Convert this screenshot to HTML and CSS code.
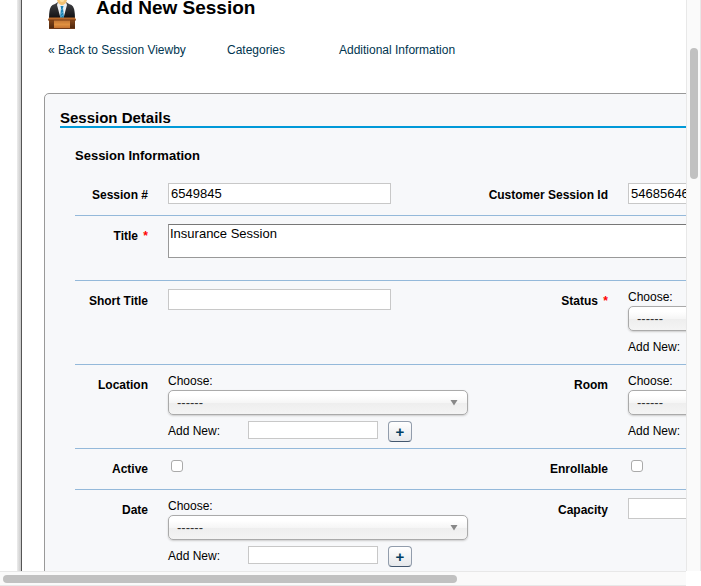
FILE: index.html
```html
<!DOCTYPE html>
<html lang="en">
<head>
<meta charset="utf-8">
<title>Add New Session</title>
<link rel="stylesheet" href="styles.css">
</head>
<body>
<main class="viewport">
  <div class="page">
    <header class="page-header">
      <svg class="speaker" viewBox="0 0 28 29" aria-hidden="true">
        <defs>
          <linearGradient id="suit" x1="0" y1="0" x2="0" y2="1"><stop offset="0" stop-color="#454548"/><stop offset="1" stop-color="#111114"/></linearGradient>
          <linearGradient id="wood" x1="0" y1="0" x2="0" y2="1"><stop offset="0" stop-color="#c07434"/><stop offset="0.5" stop-color="#e09040"/><stop offset="1" stop-color="#bd6b2c"/></linearGradient>
          <linearGradient id="side" x1="0" y1="0" x2="0" y2="1"><stop offset="0" stop-color="#8a4a1c"/><stop offset="1" stop-color="#4a240c"/></linearGradient>
        </defs>
        <path d="M1 18 Q1 10 3 6.500 Q4 4.500 7 4 L10 2 H18 L21 4 Q24 4.500 25 6.500 Q27 10 27 18Z" fill="url(#suit)"/>
        <path d="M10 2 L9 5 L12.500 18 H15.500 L19 5 L18 2Z" fill="#eef0f2"/>
        <path d="M9 0 H19 Q18.500 3 16 4.500 Q14 6 12 4.500 Q9.500 3 9 0Z" fill="#f3c273"/>
        <path d="M11.500 0 H16.500 Q16 2 14 2 Q12 2 11.500 0Z" fill="#ffdf9f"/>
        <path d="M12.500 6 H15.500 L15 8 L16 18 H12 L13 8Z" fill="#1c83b5"/>
        <path d="M13 10 L15 8.500 M12.500 14 L15.500 11.500 M12.500 17 L15.500 14.500" stroke="#69bde0" stroke-width="0.800"/>
        <path d="M1 19 H27 V29 H1Z" fill="url(#side)"/>
        <path d="M6 20 H22 V29 H6Z" fill="url(#wood)"/>
        <path d="M1 17.500 H27 L28 20 H0Z" fill="#b96a2c"/>
        <path d="M0 20 H28" stroke="#743b14"/>
        <path d="M1 28.500 H27" stroke="#6e3919"/>
      </svg>
      <h1>Add New Session</h1>
    </header>
    <nav class="links">
      <a href="#viewby">« Back to Session Viewby</a>
      <a href="#categories">Categories</a>
      <a href="#additional">Additional Information</a>
    </nav>
    <form class="panel">
      <h2>Session Details</h2>
      <div class="section">
        <h3>Session Information</h3>
        <div class="row">
          <label class="name" for="number">Session #</label>
          <div class="field"><input class="text" id="number" type="text" value="6549845"></div>
          <label class="name" for="customer">Customer Session Id</label>
          <div class="field"><input class="text" id="customer" type="text" value="546856465"></div>
        </div>
        <div class="row title-row">
          <label class="name" for="title">Title <span class="required">*</span></label>
          <div class="field wide"><textarea id="title">Insurance Session</textarea></div>
        </div>
        <div class="row">
          <label class="name" for="short">Short Title</label>
          <div class="field"><input class="text" id="short" type="text"></div>
          <label class="name" for="status">Status <span class="required">*</span></label>
          <div class="field choice">
            <label for="status">Choose:</label>
            <select id="status"><option>------</option></select>
            <div class="add"><label for="new-status">Add New:</label><input id="new-status" type="text"><button type="button" aria-label="Add status">+</button></div>
          </div>
        </div>
        <div class="row">
          <label class="name" for="location">Location</label>
          <div class="field choice">
            <label for="location">Choose:</label>
            <select id="location"><option>------</option></select>
            <div class="add"><label for="new-location">Add New:</label><input id="new-location" type="text"><button type="button" aria-label="Add location">+</button></div>
          </div>
          <label class="name" for="room">Room</label>
          <div class="field choice">
            <label for="room">Choose:</label>
            <select id="room"><option>------</option></select>
            <div class="add"><label for="new-room">Add New:</label><input id="new-room" type="text"><button type="button" aria-label="Add room">+</button></div>
          </div>
        </div>
        <div class="row check-row">
          <label class="name" for="active">Active</label>
          <div class="field"><input id="active" type="checkbox"></div>
          <label class="name" for="enrollable">Enrollable</label>
          <div class="field"><input id="enrollable" type="checkbox"></div>
        </div>
        <div class="row">
          <label class="name" for="date">Date</label>
          <div class="field choice">
            <label for="date">Choose:</label>
            <select id="date"><option>------</option></select>
            <div class="add"><label for="new-date">Add New:</label><input id="new-date" type="text"><button type="button" aria-label="Add date">+</button></div>
          </div>
          <label class="name" for="capacity">Capacity</label>
          <div class="field"><input class="text" id="capacity" type="text"></div>
        </div>
      </div>
    </form>
  </div>
</main>
<div class="bar vertical"><div class="thumb"></div></div>
<div class="bar horizontal"><div class="thumb"></div></div>
</body>
</html>
```

FILE: styles.css
```css
* { box-sizing: border-box; }

body {
  margin: 0;
  height: 100vh;
  display: grid;
  grid-template: minmax(0, 1fr) 15px / minmax(0, 1fr) 15px;
  overflow: hidden;
  background: #fff;
  color: #000;
  font: 12px/16px "Liberation Sans", Arial, sans-serif;
}

h1, h2, h3 { margin: 0; }
input, select, textarea, button { margin: 0; font-family: inherit; color: inherit; }

.viewport {
  overflow: hidden;
  padding-left: 17px;
}

.page {
  min-width: 960px;
  background: linear-gradient(to right, #ececec, #c8c8c8 4px, #555 4px, #555 5px, #fff 5px);
  padding: 0 22px 0 27px;
}

.page-header {
  display: flex;
  gap: 20px;
  padding-left: 4px;
}

.speaker {
  width: 28px;
  height: 29px;
}

h1 {
  font-size: 19px;
  line-height: 15px;
}

.links {
  display: grid;
  grid-template-columns: 179px 112px auto;
  padding: 13px 0 35px 4px;
}

.links a {
  color: #003550;
  text-decoration: none;
}

.panel {
  border: 1px solid #999;
  border-radius: 5px;
  background: #f7f8fa;
  padding: 15px;
}

h2 {
  border-bottom: 2px solid #0099d8;
  font-size: 15px;
  line-height: 17px;
}

.section { padding: 20px 15px 0; }

h3 {
  padding-bottom: 11px;
  font-size: 13px;
  line-height: 16px;
}

.row {
  display: grid;
  grid-template-columns: 93px 300px 160px minmax(300px, 1fr);
  border-bottom: 1px solid #94b9da;
}

.name {
  padding: 12px 20px 0 0;
  font-weight: bold;
  text-align: right;
}

.required {
  margin-left: 2px;
  color: #f00;
}

.field { padding: 8px 0 11px; }
.wide { grid-column: 2 / -1; }
.title-row .field { padding-bottom: 22px; }

input[type="text"] {
  display: block;
  border: 1px solid #c8c8c8;
  background: #fff;
  padding: 0 2px;
  font-size: 13px;
}

.text {
  width: 223px;
  height: 21px;
}

textarea {
  display: block;
  width: 100%;
  height: 34px;
  border: 1px solid #999;
  border-top-color: #777;
  padding: 1px;
  background: #fff;
  font-size: 13px;
  line-height: 16px;
  resize: none;
}

.choice { padding-bottom: 6px; }

.choice > label {
  display: block;
  margin-bottom: 1px;
}

select {
  display: block;
  appearance: none;
  width: 300px;
  height: 25px;
  margin-bottom: 6px;
  border: 1px solid #aaa;
  border-radius: 5px;
  padding: 0 8px;
  background:
    url("data:image/svg+xml,%3Csvg xmlns='http://www.w3.org/2000/svg' width='8' height='6'%3E%3Cpath d='M0.500 0H7.500L4 5.500Z' fill='%23888'/%3E%3C/svg%3E") right 9px top 9px no-repeat,
    linear-gradient(#fff 20%, #f6f6f6 50%, #eee 52%, #f4f4f4);
  box-shadow: 0 1px 2px #ccc;
  color: #333;
  font-size: 13px;
}

.add {
  display: grid;
  grid-template-columns: 80px 130px 34px;
  align-items: start;
  height: 21px;
}

.add label { line-height: 20px; }
.add input { height: 18px; }

button {
  width: 24px;
  height: 21px;
  margin-left: 10px;
  border: 1px solid #929dac;
  border-bottom-color: #42566e;
  border-radius: 4px;
  padding: 0;
  background: linear-gradient(#fff, #e6e8eb);
  font-size: 15px;
  font-weight: bold;
  line-height: 16px;
}

.add button {
  margin-left: 10px;
  color: #003e62;
}

.check-row .field { padding: 11px 0 17px 3px; }

input[type="checkbox"] {
  display: block;
  appearance: none;
  width: 12px;
  height: 12px;
  border: 1px solid #aaa;
  border-radius: 3px;
  background: #fff;
}

.bar { background: #fafafa; }

.vertical {
  border: solid #e8e8e8;
  border-width: 0 1px;
  padding: 48px 2px 0 3px;
}

.vertical .thumb { height: 25%; }

.horizontal {
  border: solid #e8e8e8;
  border-width: 1px 0;
  padding: 3px 0 2px 3px;
}

.horizontal .thumb {
  width: 66.5%;
  height: 100%;
}

.thumb {
  border-radius: 4px;
  background: #c1c1c1;
}
```
